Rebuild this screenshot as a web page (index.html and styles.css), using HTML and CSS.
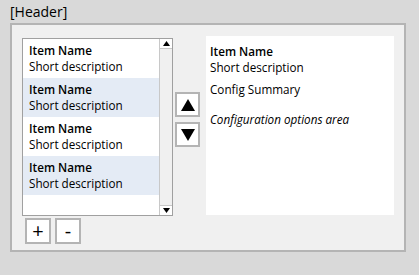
FILE: index.html
```html
<!DOCTYPE html>
<html lang="en">
<head>
  <meta charset="UTF-8" />
  <meta name="viewport" content="width=device-width, initial-scale=1.0"/>
  <title>Item Editor</title>
  <link rel="stylesheet" href="styles.css">
</head>
<body>

  <div class="header">[Header]</div>

  <div class="panel">
    <div class="left">
      <div class="listbox">
        <div class="items">
          <div class="item">
            <div class="name">Item Name</div>
            <div class="desc">Short description</div>
          </div>
          <div class="item alt">
            <div class="name">Item Name</div>
            <div class="desc">Short description</div>
          </div>
          <div class="item">
            <div class="name">Item Name</div>
            <div class="desc">Short description</div>
          </div>
          <div class="item alt">
            <div class="name">Item Name</div>
            <div class="desc">Short description</div>
          </div>
        </div>
        <div class="scrollbar">
          <div class="scroll-btn">
            <svg width="7" height="5" viewBox="0 0 7 5"><polygon points="3.5,0 7,5 0,5" /></svg>
          </div>
          <div class="scroll-track"></div>
          <div class="scroll-btn down">
            <svg width="7" height="5" viewBox="0 0 7 5"><polygon points="0,0 7,0 3.5,5" /></svg>
          </div>
        </div>
      </div>
      <div class="add-remove">
        <button class="sq-btn">+</button>
        <button class="sq-btn">-</button>
      </div>
    </div>

    <div class="move">
      <button class="sq-btn arrow">
        <svg width="14" height="12" viewBox="0 0 14 12"><polygon points="7,0 14,12 0,12" /></svg>
      </button>
      <button class="sq-btn arrow">
        <svg width="14" height="12" viewBox="0 0 14 12"><polygon points="0,0 14,0 7,12" /></svg>
      </button>
    </div>

    <div class="details">
      <div class="name">Item Name</div>
      <div class="desc">Short description</div>
      <div class="summary">Config Summary</div>
      <div class="options">Configuration options area</div>
    </div>
  </div>

</body>
</html>
```

FILE: styles.css
```css
body {
  margin: 0;
  padding: 2px 0 0 10px;
  background: #d9d9d9;
  font-family: "Open Sans", "Noto Sans", sans-serif;
  font-size: 11.7px;
  color: #000;
}
.header {
  font-size: 14px;
  line-height: 19px;
  height: 19px;
}
.panel {
  display: flex;
  align-items: flex-start;
  width: 392px;
  height: 225px;
  margin-top: 2px;
  background: #f0f0f0;
  border: 2px solid #b4b4b4;
}
.left {
  margin: 13px 0 0 10px;
}
.listbox {
  display: flex;
  width: 149px;
  height: 176px;
  background: white;
  border: 1px solid #a0a0a0;
}
.items {
  flex: 1;
}
.item {
  height: 39px;
  padding: 3px 0 0 6px;
  box-sizing: border-box;
  line-height: 16px;
}
.item.alt {
  background: #e4ebf5;
}
.name {
  font-weight: 600;
}
.scrollbar {
  width: 12px;
  display: flex;
  flex-direction: column;
  border-left: 1px solid #c8c8c8;
  background: #f0f0f0;
}
.scroll-btn {
  height: 9px;
  display: flex;
  align-items: center;
  justify-content: center;
  background: white;
  border-bottom: 1px solid #c8c8c8;
}
.scroll-btn.down {
  border-bottom: none;
  border-top: 1px solid #c8c8c8;
}
.scroll-track {
  flex: 1;
}
.add-remove {
  display: flex;
  gap: 4px;
  margin: 2px 0 0 3px;
}
.sq-btn {
  width: 26px;
  height: 26px;
  padding: 0;
  display: flex;
  align-items: center;
  justify-content: center;
  background: white;
  border: 2px solid #b4b4b4;
  font-family: inherit;
  font-size: 20px;
  font-weight: normal;
  line-height: 20px;
  color: #000;
}
.move {
  display: flex;
  flex-direction: column;
  gap: 5px;
  margin: 67px 0 0 2px;
}
.sq-btn.arrow {
  width: 25px;
  height: 25px;
}
.details {
  width: 184px;
  height: 172px;
  margin: 11px 0 0 6px;
  padding: 7px 0 0 4px;
  background: white;
  line-height: 16px;
}
.details .summary {
  margin-top: 6px;
}
.details .options {
  margin-top: 14px;
  font-style: italic;
}
```
